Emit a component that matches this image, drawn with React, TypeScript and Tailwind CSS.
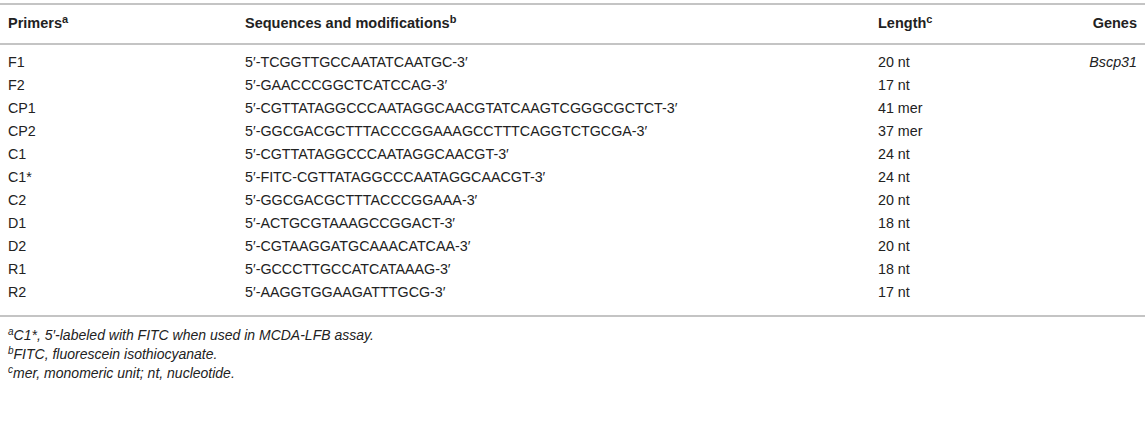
const rows: [string, string, string, string][] = [
  ["F1", "5′-TCGGTTGCCAATATCAATGC-3′", "20 nt", "Bscp31"],
  ["F2", "5′-GAACCCGGCTCATCCAG-3′", "17 nt", ""],
  ["CP1", "5′-CGTTATAGGCCCAATAGGCAACGTATCAAGTCGGGCGCTCT-3′", "41 mer", ""],
  ["CP2", "5′-GGCGACGCTTTACCCGGAAAGCCTTTCAGGTCTGCGA-3′", "37 mer", ""],
  ["C1", "5′-CGTTATAGGCCCAATAGGCAACGT-3′", "24 nt", ""],
  ["C1*", "5′-FITC-CGTTATAGGCCCAATAGGCAACGT-3′", "24 nt", ""],
  ["C2", "5′-GGCGACGCTTTACCCGGAAA-3′", "20 nt", ""],
  ["D1", "5′-ACTGCGTAAAGCCGGACT-3′", "18 nt", ""],
  ["D2", "5′-CGTAAGGATGCAAACATCAA-3′", "20 nt", ""],
  ["R1", "5′-GCCCTTGCCATCATAAAG-3′", "18 nt", ""],
  ["R2", "5′-AAGGTGGAAGATTTGCG-3′", "17 nt", ""],
];

const grid = "grid grid-cols-[237px_633px_1fr_auto] pl-2 pr-2";

export default function App() {
  return (
    <div className="w-[1145px] h-[422px] bg-white text-[#222] font-['Liberation_Sans',Arial,sans-serif] text-[14.3px] pt-[3px]">
      <div className="border-t-2 border-b-2 border-[#c4c4c4]">
        <div className={`${grid} h-[38px] items-center font-bold text-[14.5px]`}>
          <div>
            Primers<sup className="text-[11px]">a</sup>
          </div>
          <div>
            Sequences and modifications<sup className="text-[11px]">b</sup>
          </div>
          <div>
            Length<sup className="text-[11px]">c</sup>
          </div>
          <div className="text-right">Genes</div>
        </div>
      </div>
      <div className="border-b-2 border-[#c4c4c4] pt-[6px] pb-[11px]">
        {rows.map(([p, s, l, g]) => (
          <div key={p} className={`${grid} h-[23px] items-center`}>
            <div>{p}</div>
            <div>{s}</div>
            <div>{l}</div>
            <div className="text-right italic">{g}</div>
          </div>
        ))}
      </div>
      <div className="pl-2 pt-[9px] text-[14px] italic leading-[19px]">
        <p>
          <sup className="text-[10px]">a</sup>C1*, 5′-labeled with FITC when used in MCDA-LFB assay.
        </p>
        <p>
          <sup className="text-[10px]">b</sup>FITC, fluorescein isothiocyanate.
        </p>
        <p>
          <sup className="text-[10px]">c</sup>mer, monomeric unit; nt, nucleotide.
        </p>
      </div>
    </div>
  );
}
